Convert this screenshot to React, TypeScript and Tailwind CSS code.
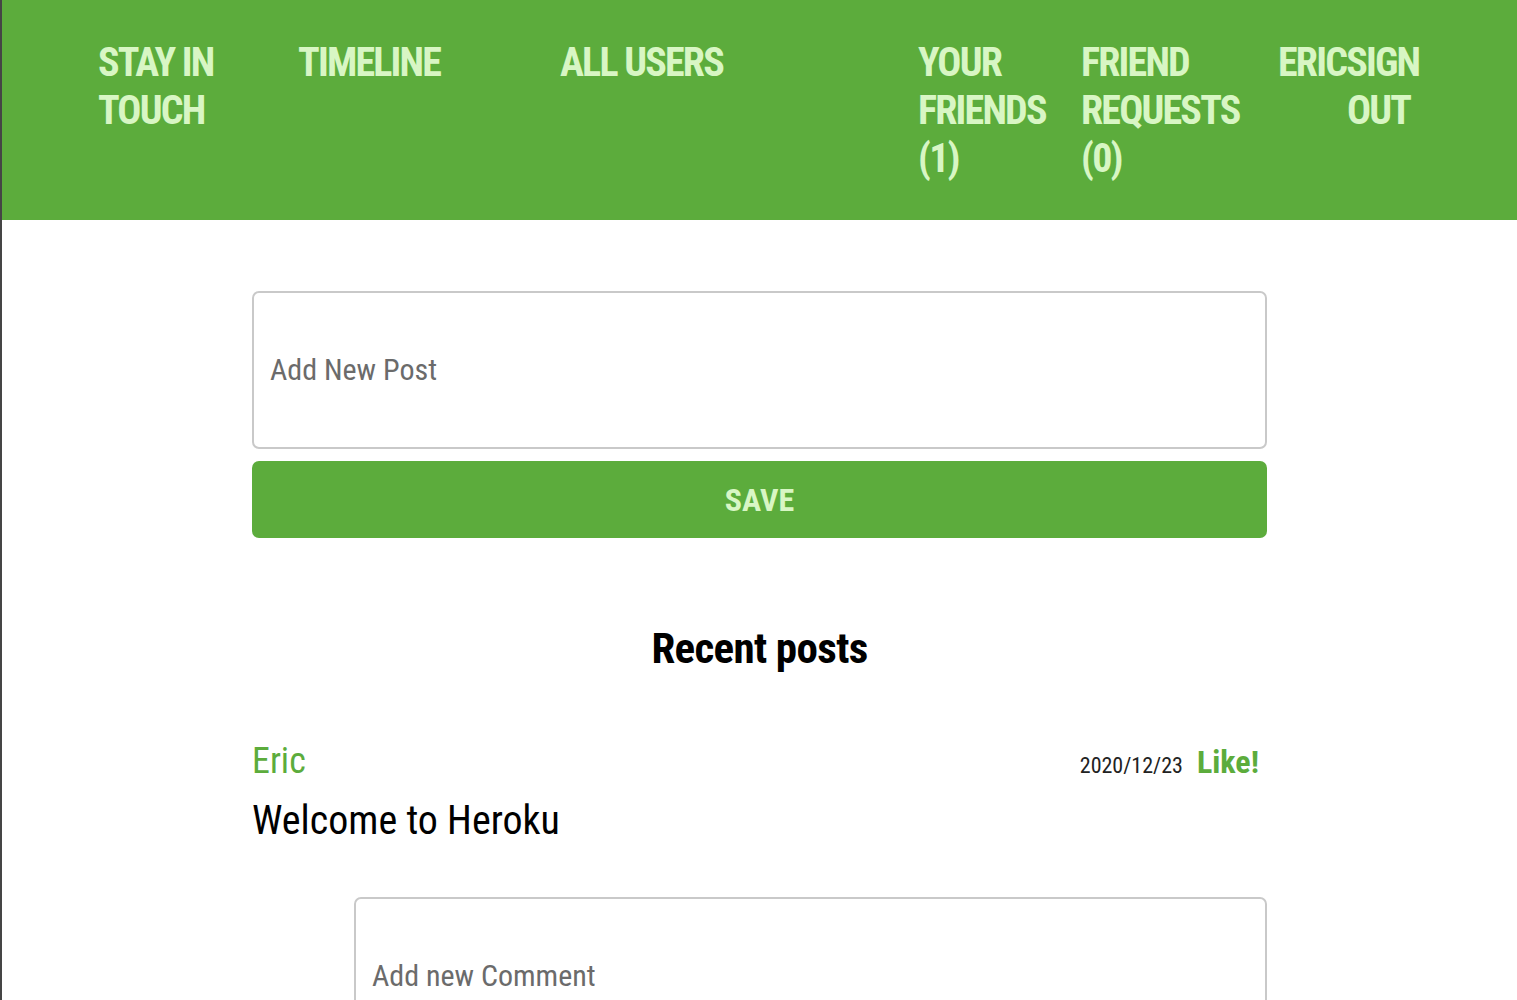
const navItems = [
  { label: ["STAY IN", "TOUCH"], width: "w-[200px]" },
  { label: ["TIMELINE"], width: "w-[262px]" },
  { label: ["ALL USERS"], width: "w-[358px]" },
  { label: ["YOUR", "FRIENDS", "(1)"], width: "w-[163px]" },
  { label: ["FRIEND", "REQUESTS", "(0)"], width: "w-[197px]" },
];

export default function App() {
  return (
    <div className="min-h-screen border-l-2 border-[#454545] bg-white font-['Roboto_Condensed',Roboto,sans-serif]">
      <header className="bg-[#5cac3c] pl-[96px] pt-[39px] pb-[37px]">
        <nav className="flex items-start text-[40px] font-bold leading-[48px] tracking-[-0.045em] text-[#d8f6c4]">
          {navItems.map((item) => (
            <a key={item.label.join(" ")} href="#" className={`${item.width} flex flex-col`}>
              {item.label.map((line) => (
                <span key={line}>{line}</span>
              ))}
            </a>
          ))}
          <a href="#" className="flex flex-col">
            <span>ERICSIGN</span>
            <span className="pl-[69px]">OUT</span>
          </a>
        </nav>
      </header>

      <main className="mx-auto w-[1015px] pt-[71px]">
        <form className="flex flex-col gap-[12px]">
          <textarea
            placeholder="Add New Post"
            className="h-[158px] resize-none rounded-[7px] border-2 border-[#c9c9c9] px-[16px] pt-[59px] text-[30px] leading-[36px] placeholder:text-[#6b6b6b] outline-none"
          />
          <button
            type="button"
            className="h-[77px] rounded-[7px] bg-[#5cac3c] text-[32px] font-bold text-[#d8f6c4]"
          >
            SAVE
          </button>
        </form>

        <h2 className="mt-[84px] text-center text-[43px] font-bold leading-[52px] tracking-[-0.015em] text-black">
          Recent posts
        </h2>

        <article className="mt-[64px]">
          <div className="flex items-baseline justify-between pr-[8px]">
            <span className="text-[36px] leading-[40px] text-[#5cac3c]">Eric</span>
            <div className="flex items-baseline gap-[14px]">
              <span className="text-[22px] text-[#222]">2020/12/23</span>
              <button type="button" className="text-[32px] font-bold text-[#5cac3c]">
                Like!
              </button>
            </div>
          </div>
          <p className="mt-[11px] text-[40px] leading-[48px] text-black">Welcome to Heroku</p>

          <div className="ml-[102px] mt-[52px]">
            <textarea
              placeholder="Add new Comment"
              className="h-[158px] w-full resize-none rounded-[7px] border-2 border-[#c9c9c9] px-[16px] pt-[59px] text-[30px] leading-[36px] placeholder:text-[#6b6b6b] outline-none"
            />
          </div>
        </article>
      </main>
    </div>
  );
}
